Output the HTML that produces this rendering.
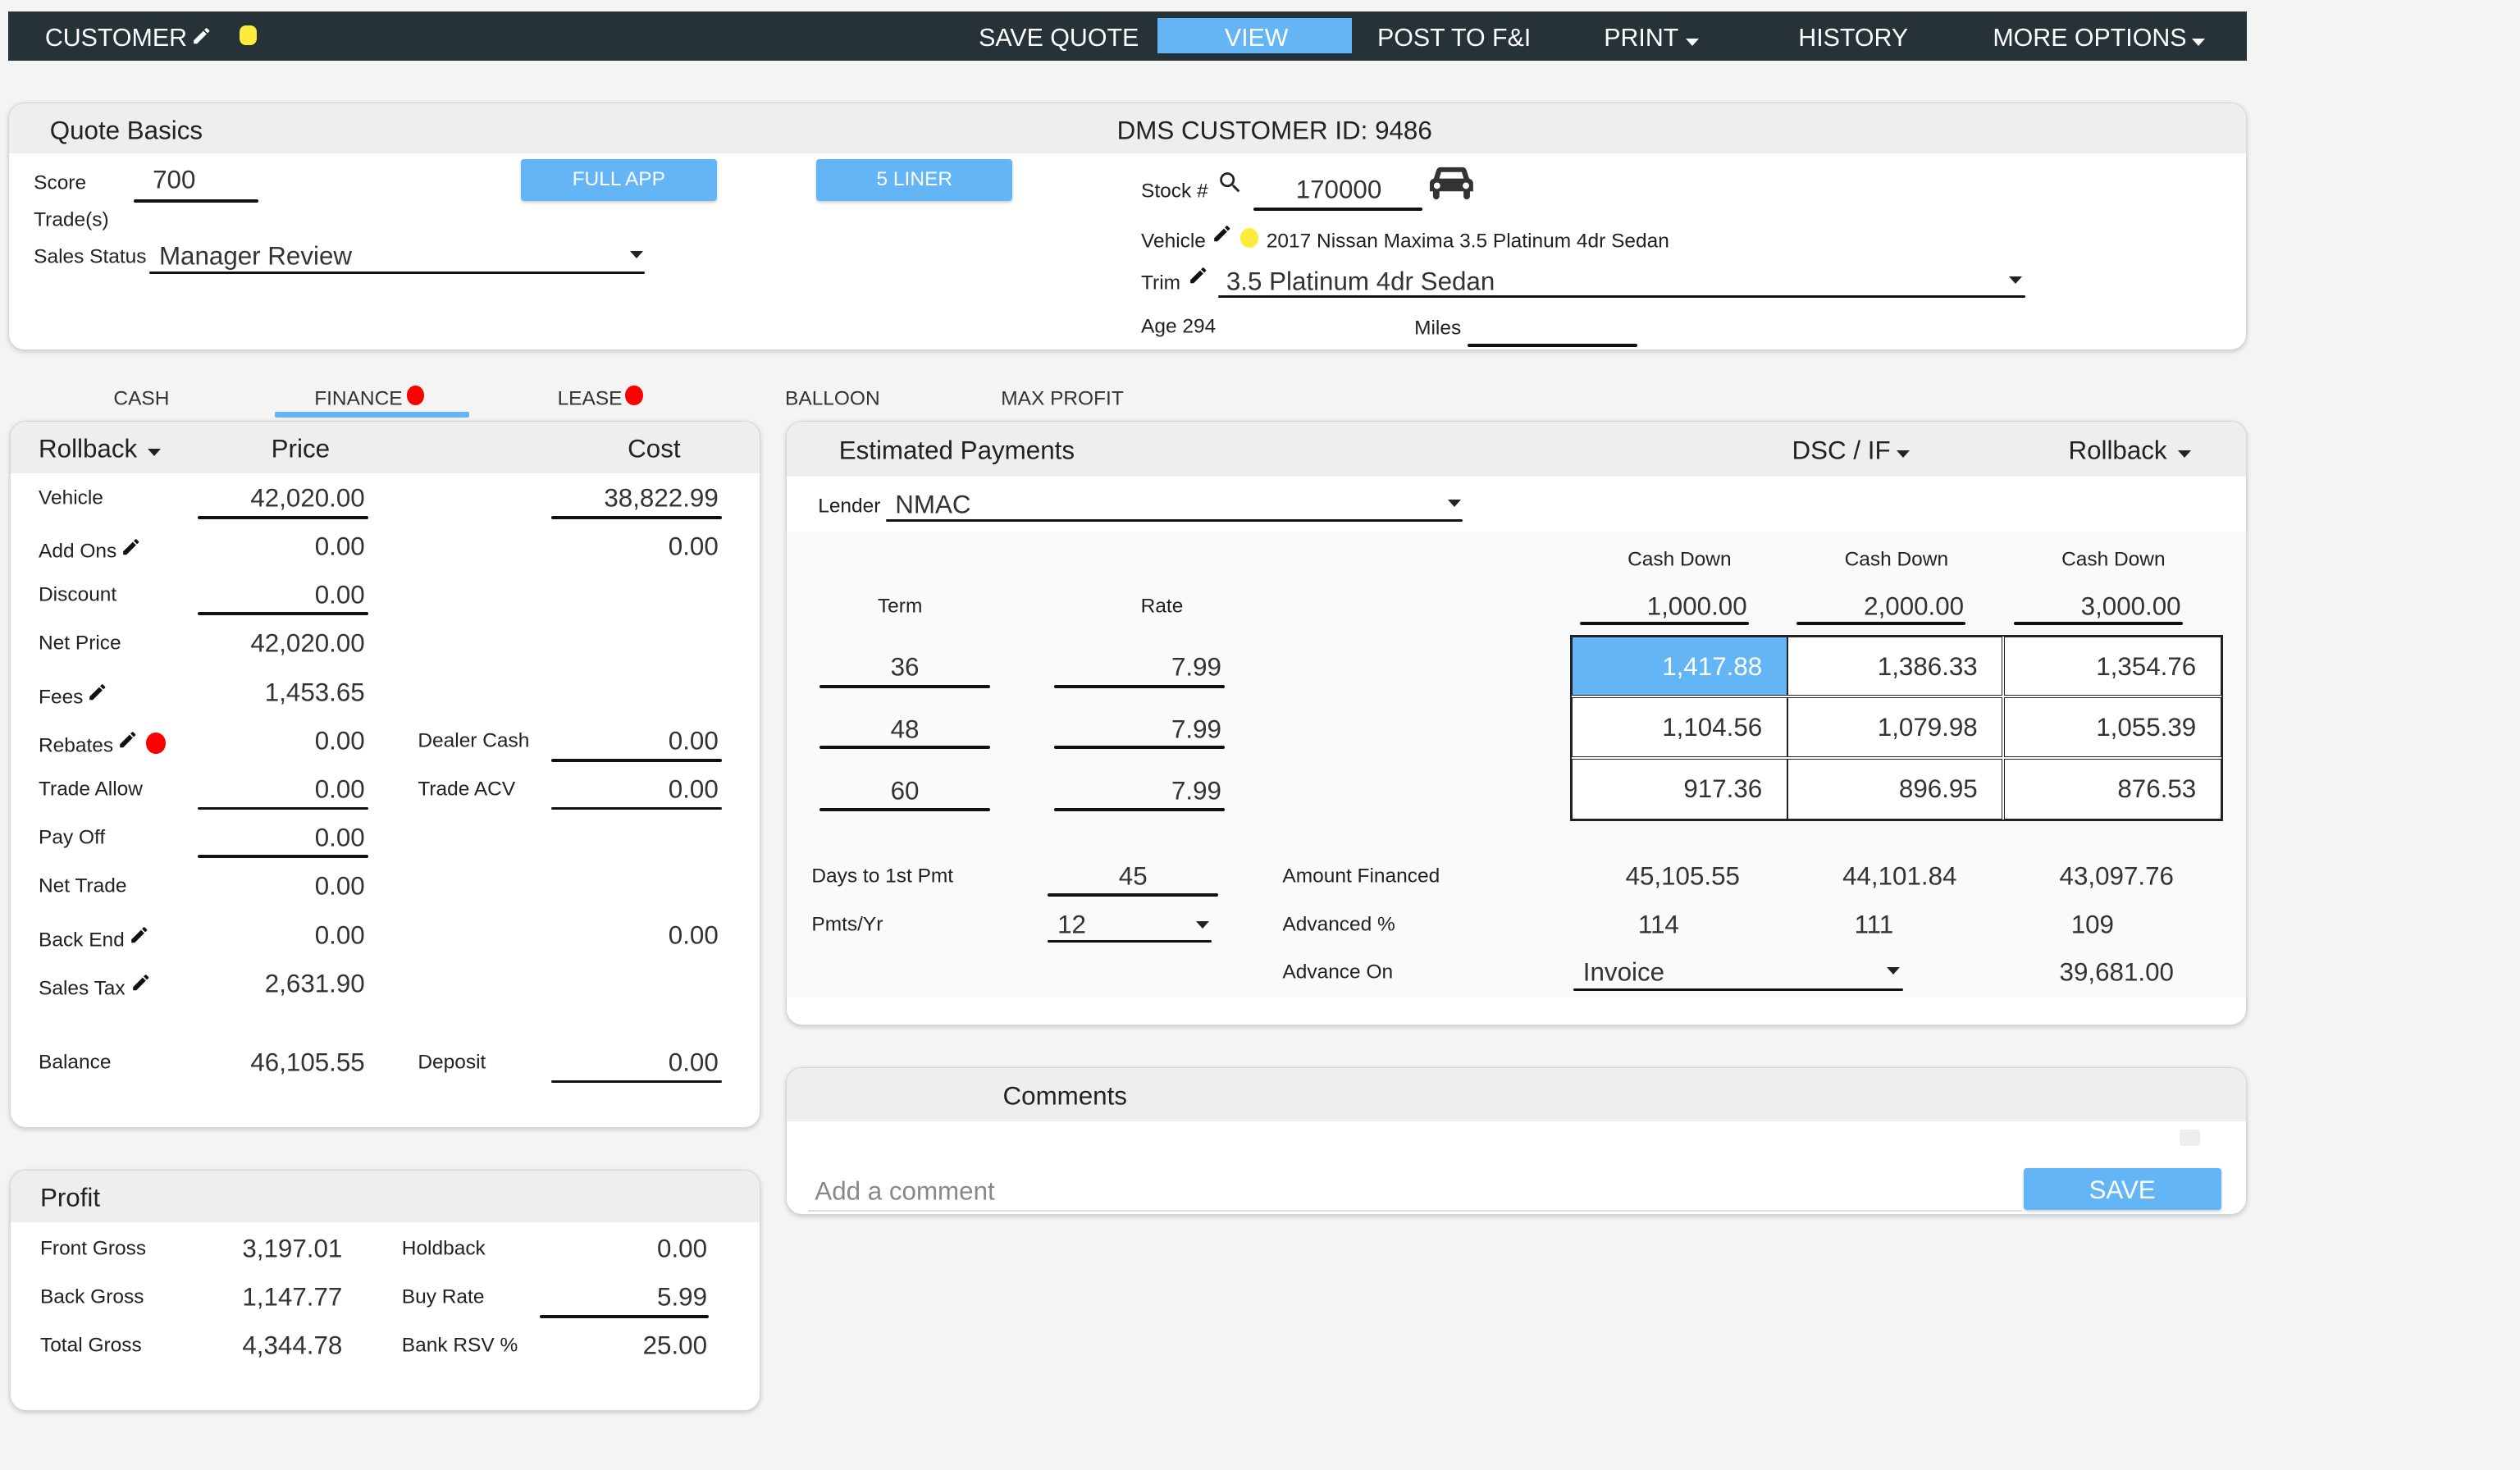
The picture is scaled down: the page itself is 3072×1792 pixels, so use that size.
<!DOCTYPE html>
<html><head><meta charset="utf-8">
<style>
html,body{margin:0;padding:0;background:#f4f4f4;overflow:hidden}
body{width:3072px;height:1792px}
#w{zoom:1.95918;position:relative;width:1568px;height:915px;font-family:"Liberation Sans",Arial,sans-serif;color:#222}
.t,.r,.c{position:absolute;white-space:nowrap;line-height:20px;transform:translateY(-50%)}
.r{transform:translate(-100%,-50%)}
.c{transform:translate(-50%,-50%)}
.u{position:absolute;height:2px;background:#111;border-radius:1px}
.s{font-size:12.5px}
.v{font-size:16px;color:#333}
.p{position:absolute;background:#fff;border:1px solid #d6d6d6;border-radius:10px;box-shadow:0 1px 3px rgba(0,0,0,.18);overflow:hidden}
.h{position:absolute;left:0;right:0;top:0;background:#eee}
.btn{position:absolute;background:#64b5f6;color:#fff;text-align:center;border-radius:2px;box-shadow:0 1px 2px rgba(0,0,0,.2)}
.dot{position:absolute;border-radius:50%}
.arr{position:absolute;width:0;height:0;border-left:4.5px solid transparent;border-right:4.5px solid transparent;border-top:5px solid #222}
.nav{position:absolute;left:5px;top:7px;width:1393px;height:31px;background:#263238}
.nv{position:absolute;color:#fff;font-size:15.5px;line-height:20px;top:7px;white-space:nowrap}
.cell{position:absolute;width:134px;height:37px;border:1px solid #222;box-sizing:border-box;font-size:16px;line-height:37px;text-align:right;padding-right:15px;color:#333}
</style></head><body><div id="w">

<div class="nav">
 <div class="nv" style="left:23px">CUSTOMER</div>
 <svg style="position:absolute;left:114px;top:9px" width="13" height="13" viewBox="0 0 24 24"><path fill="#fff" d="M3 17.25V21h3.75L17.81 9.94l-3.75-3.75L3 17.25zM20.71 7.04a1 1 0 000-1.41l-2.34-2.34a1 1 0 00-1.41 0l-1.83 1.83 3.75 3.75 1.83-1.83z"/></svg>
 <div class="dot" style="left:144px;top:9px;width:11px;height:12px;background:#ffeb3b;border-radius:4px"></div>
 <div class="nv" style="left:604px">SAVE QUOTE</div>
 <div style="position:absolute;left:715px;top:4px;width:121px;height:22px;background:#64b5f6"></div>
 <div class="nv" style="left:757px">VIEW</div>
 <div class="nv" style="left:852px">POST TO F&amp;I</div>
 <div class="nv" style="left:993px">PRINT</div>
 <div class="arr" style="left:1044px;top:17px;border-top-color:#fff"></div>
 <div class="nv" style="left:1114px">HISTORY</div>
 <div class="nv" style="left:1235px">MORE OPTIONS</div>
 <div class="arr" style="left:1359px;top:17px;border-top-color:#fff"></div>
</div>

<!-- Quote basics -->
<div class="p" style="left:5px;top:64px;width:1392px;height:153px"><div class="h" style="height:31px"></div></div>
<div class="t" style="left:31px;top:81px;font-size:16px">Quote Basics</div>
<div class="t" style="left:695px;top:81px;font-size:16px">DMS CUSTOMER ID: 9486</div>
<div class="t s" style="left:21px;top:114px">Score</div>
<div class="t v" style="left:95px;top:112px">700</div>
<div class="u" style="left:83px;top:124px;width:78px"></div>
<div class="btn" style="left:324px;top:99px;width:122px;height:26px;line-height:26px;font-size:12.5px">FULL APP</div>
<div class="btn" style="left:508px;top:99px;width:122px;height:26px;line-height:26px;font-size:12.5px">5 LINER</div>
<div class="t s" style="left:21px;top:137px">Trade(s)</div>
<div class="t s" style="left:21px;top:160px">Sales Status</div>
<div class="t v" style="left:99px;top:159px">Manager Review</div>
<div class="arr" style="left:392px;top:156px"></div>
<div class="u" style="left:93px;top:169px;width:308px;height:1.5px"></div>

<div class="t s" style="left:710px;top:119px">Stock #</div>
<svg style="position:absolute;left:757px;top:105px" width="17" height="17" viewBox="0 0 24 24"><path fill="#222" d="M15.5 14h-.79l-.28-.27A6.470 6.470 0 0016 9.5 6.5 6.5 0 109.5 16c1.61 0 3.090-.59 4.23-1.570l.27.28v.79l5 4.99L20.49 19l-4.99-5zm-6 0C7.01 14 5 11.99 5 9.5S7.01 5 9.5 5 14 7.01 14 9.5 11.99 14 9.5 14z"/></svg>
<div class="c v" style="left:833px;top:118px">170000</div>
<div class="u" style="left:780px;top:129px;width:105px"></div>
<svg style="position:absolute;left:889px;top:101px" width="28" height="24" viewBox="0 0 28 24"><path fill="#333" d="M7 3h14c1.2 0 2 .8 2.4 2l1.6 5c1.4.4 2.5 1.5 2.5 3v5h-2v3c0 1.1-.9 2-2 2s-2-.9-2-2v-3H6.5v3c0 1.1-.9 2-2 2s-2-.9-2-2v-3h-2v-5c0-1.5 1.1-2.6 2.5-3l1.6-5C5 3.8 5.8 3 7 3zm.6 3L6.4 10h15.2l-1.2-4H7.6zM5 12.5a2 2 0 100 4 2 2 0 000-4zm18 0a2 2 0 100 4 2 2 0 000-4z"/></svg>
<div class="t s" style="left:710px;top:150px">Vehicle</div>
<svg style="position:absolute;left:754px;top:139px" width="13" height="13" viewBox="0 0 24 24"><path fill="#111" d="M3 17.25V21h3.75L17.81 9.94l-3.75-3.75L3 17.25zM20.71 7.04a1 1 0 000-1.41l-2.34-2.34a1 1 0 00-1.41 0l-1.83 1.83 3.75 3.75 1.83-1.83z"/></svg>
<div class="dot" style="left:772px;top:142px;width:11px;height:12px;background:#ffeb3b"></div>
<div class="t" style="left:788px;top:150px;font-size:12.5px">2017 Nissan Maxima 3.5 Platinum 4dr Sedan</div>
<div class="t s" style="left:710px;top:176px">Trim</div>
<svg style="position:absolute;left:739px;top:165px" width="13" height="13" viewBox="0 0 24 24"><path fill="#111" d="M3 17.25V21h3.75L17.81 9.94l-3.75-3.75L3 17.25zM20.71 7.04a1 1 0 000-1.41l-2.34-2.34a1 1 0 00-1.41 0l-1.83 1.83 3.75 3.75 1.83-1.83z"/></svg>
<div class="t v" style="left:763px;top:175px">3.5 Platinum 4dr Sedan</div>
<div class="arr" style="left:1250px;top:172px"></div>
<div class="u" style="left:758px;top:184px;width:502px;height:1.5px"></div>
<div class="t s" style="left:710px;top:203px">Age 294</div>
<div class="t s" style="left:880px;top:204px">Miles</div>
<div class="u" style="left:913px;top:214px;width:106px"></div>

<!-- tabs -->
<div class="c s" style="left:88px;top:248px;color:#333">CASH</div>
<div class="c s" style="left:223px;top:248px;color:#333">FINANCE</div>
<div class="dot" style="left:253px;top:240px;width:11px;height:12px;background:#f00"></div>
<div class="u" style="left:171px;top:256px;width:121px;height:4px;background:#64b5f6"></div>
<div class="c s" style="left:367px;top:248px;color:#333">LEASE</div>
<div class="dot" style="left:389px;top:240px;width:11px;height:12px;background:#f00"></div>
<div class="c s" style="left:518px;top:248px;color:#333">BALLOON</div>
<div class="c s" style="left:661px;top:248px;color:#333">MAX PROFIT</div>

<!-- Left panel -->
<div class="p" style="left:6px;top:262px;width:466px;height:439px"><div class="h" style="height:32px"></div></div>
<div class="t" style="left:24px;top:279px;font-size:16px">Rollback</div>
<div class="arr" style="left:92px;top:279px"></div>
<div class="c" style="left:187px;top:279px;font-size:16px">Price</div>
<div class="c" style="left:407px;top:279px;font-size:16px">Cost</div>

<div class="t s" style="left:24px;top:310px">Vehicle</div>
<div class="r v" style="left:227px;top:310px">42,020.00</div><div class="u" style="left:123px;top:321px;width:106px"></div>
<div class="r v" style="left:447px;top:310px">38,822.99</div><div class="u" style="left:343px;top:321px;width:106px"></div>
<div class="t s" style="left:24px;top:343px">Add Ons</div>
<svg style="position:absolute;left:75px;top:334px" width="13" height="13" viewBox="0 0 24 24"><path fill="#111" d="M3 17.25V21h3.75L17.81 9.94l-3.75-3.75L3 17.25zM20.71 7.04a1 1 0 000-1.41l-2.34-2.34a1 1 0 00-1.41 0l-1.83 1.83 3.75 3.75 1.83-1.83z"/></svg>
<div class="r v" style="left:227px;top:340px">0.00</div>
<div class="r v" style="left:447px;top:340px">0.00</div>
<div class="t s" style="left:24px;top:370px">Discount</div>
<div class="r v" style="left:227px;top:370px">0.00</div><div class="u" style="left:123px;top:381px;width:106px"></div>
<div class="t s" style="left:24px;top:400px">Net Price</div>
<div class="r v" style="left:227px;top:400px">42,020.00</div>
<div class="t s" style="left:24px;top:434px">Fees</div>
<svg style="position:absolute;left:54px;top:424px" width="13" height="13" viewBox="0 0 24 24"><path fill="#111" d="M3 17.25V21h3.75L17.81 9.94l-3.75-3.75L3 17.25zM20.71 7.04a1 1 0 000-1.41l-2.34-2.34a1 1 0 00-1.41 0l-1.83 1.83 3.75 3.75 1.83-1.83z"/></svg>
<div class="r v" style="left:227px;top:431px">1,453.65</div>
<div class="t s" style="left:24px;top:464px">Rebates</div>
<svg style="position:absolute;left:73px;top:454px" width="13" height="13" viewBox="0 0 24 24"><path fill="#111" d="M3 17.25V21h3.75L17.81 9.94l-3.75-3.75L3 17.25zM20.71 7.04a1 1 0 000-1.41l-2.34-2.34a1 1 0 00-1.41 0l-1.83 1.83 3.75 3.75 1.83-1.83z"/></svg>
<div class="dot" style="left:91px;top:456px;width:12px;height:13px;background:#f00"></div>
<div class="r v" style="left:227px;top:461px">0.00</div>
<div class="t s" style="left:260px;top:461px">Dealer Cash</div>
<div class="r v" style="left:447px;top:461px">0.00</div><div class="u" style="left:343px;top:472px;width:106px"></div>
<div class="t s" style="left:24px;top:491px">Trade Allow</div>
<div class="r v" style="left:227px;top:491px">0.00</div><div class="u" style="left:123px;top:502px;width:106px"></div>
<div class="t s" style="left:260px;top:491px">Trade ACV</div>
<div class="r v" style="left:447px;top:491px">0.00</div><div class="u" style="left:343px;top:502px;width:106px"></div>
<div class="t s" style="left:24px;top:521px">Pay Off</div>
<div class="r v" style="left:227px;top:521px">0.00</div><div class="u" style="left:123px;top:532px;width:106px"></div>
<div class="t s" style="left:24px;top:551px">Net Trade</div>
<div class="r v" style="left:227px;top:551px">0.00</div>
<div class="t s" style="left:24px;top:585px">Back End</div>
<svg style="position:absolute;left:80px;top:575px" width="13" height="13" viewBox="0 0 24 24"><path fill="#111" d="M3 17.25V21h3.75L17.81 9.94l-3.75-3.75L3 17.25zM20.71 7.04a1 1 0 000-1.41l-2.34-2.34a1 1 0 00-1.41 0l-1.83 1.83 3.75 3.75 1.83-1.83z"/></svg>
<div class="r v" style="left:227px;top:582px">0.00</div>
<div class="r v" style="left:447px;top:582px">0.00</div>
<div class="t s" style="left:24px;top:615px">Sales Tax</div>
<svg style="position:absolute;left:81px;top:605px" width="13" height="13" viewBox="0 0 24 24"><path fill="#111" d="M3 17.25V21h3.75L17.81 9.94l-3.75-3.75L3 17.25zM20.71 7.04a1 1 0 000-1.41l-2.34-2.34a1 1 0 00-1.41 0l-1.83 1.83 3.75 3.75 1.83-1.83z"/></svg>
<div class="r v" style="left:227px;top:612px">2,631.90</div>
<div class="t s" style="left:24px;top:661px">Balance</div>
<div class="r v" style="left:227px;top:661px">46,105.55</div>
<div class="t s" style="left:260px;top:661px">Deposit</div>
<div class="r v" style="left:447px;top:661px">0.00</div><div class="u" style="left:343px;top:672px;width:106px"></div>

<!-- Profit -->
<div class="p" style="left:6px;top:728px;width:466px;height:149px"><div class="h" style="height:32px"></div></div>
<div class="t" style="left:25px;top:745px;font-size:16px">Profit</div>
<div class="t s" style="left:25px;top:777px">Front Gross</div>
<div class="r v" style="left:213px;top:777px">3,197.01</div>
<div class="t s" style="left:250px;top:777px">Holdback</div>
<div class="r v" style="left:440px;top:777px">0.00</div>
<div class="t s" style="left:25px;top:807px">Back Gross</div>
<div class="r v" style="left:213px;top:807px">1,147.77</div>
<div class="t s" style="left:250px;top:807px">Buy Rate</div>
<div class="r v" style="left:440px;top:807px">5.99</div><div class="u" style="left:336px;top:818px;width:105px"></div>
<div class="t s" style="left:25px;top:837px">Total Gross</div>
<div class="r v" style="left:213px;top:837px">4,344.78</div>
<div class="t s" style="left:250px;top:837px">Bank RSV %</div>
<div class="r v" style="left:440px;top:837px">25.00</div>

<!-- Estimated payments -->
<div class="p" style="left:489px;top:262px;width:908px;height:375px">
 <div class="h" style="height:34px"></div>
 <div style="position:absolute;left:0;right:0;top:68px;height:290px;background:#fafafa"></div>
</div>
<div class="t" style="left:522px;top:280px;font-size:16px">Estimated Payments</div>
<div class="t" style="left:1115px;top:280px;font-size:16px">DSC / IF</div>
<div class="arr" style="left:1180px;top:280px"></div>
<div class="t" style="left:1287px;top:280px;font-size:16px">Rollback</div>
<div class="arr" style="left:1355px;top:280px"></div>
<div class="t s" style="left:509px;top:315px">Lender</div>
<div class="t v" style="left:557px;top:314px">NMAC</div>
<div class="arr" style="left:901px;top:311px"></div>
<div class="u" style="left:551px;top:323px;width:359px;height:1.5px"></div>

<div class="c s" style="left:560px;top:377px">Term</div>
<div class="c s" style="left:723px;top:377px">Rate</div>
<div class="c s" style="left:1045px;top:348px">Cash Down</div>
<div class="c s" style="left:1180px;top:348px">Cash Down</div>
<div class="c s" style="left:1315px;top:348px">Cash Down</div>
<div class="r v" style="left:1087px;top:377px">1,000.00</div><div class="u" style="left:983px;top:387px;width:105px"></div>
<div class="r v" style="left:1222px;top:377px">2,000.00</div><div class="u" style="left:1118px;top:387px;width:105px"></div>
<div class="r v" style="left:1357px;top:377px">3,000.00</div><div class="u" style="left:1253px;top:387px;width:105px"></div>

<div class="c v" style="left:563px;top:415px">36</div><div class="u" style="left:510px;top:426px;width:106px"></div>
<div class="c v" style="left:563px;top:454px">48</div><div class="u" style="left:510px;top:464px;width:106px"></div>
<div class="c v" style="left:563px;top:492px">60</div><div class="u" style="left:510px;top:503px;width:106px"></div>
<div class="r v" style="left:760px;top:415px">7.99</div><div class="u" style="left:656px;top:426px;width:106px"></div>
<div class="r v" style="left:760px;top:454px">7.99</div><div class="u" style="left:656px;top:464px;width:106px"></div>
<div class="r v" style="left:760px;top:492px">7.99</div><div class="u" style="left:656px;top:503px;width:106px"></div>

<div style="position:absolute;left:977px;top:395px;width:406px;height:116px;border:1.5px solid #222;box-sizing:border-box;background:#fff"></div>
<div class="cell" style="left:978px;top:396px;background:#64b5f6;color:#fff">1,417.88</div>
<div class="cell" style="left:1112px;top:396px">1,386.33</div>
<div class="cell" style="left:1247px;top:396px;width:135px">1,354.76</div>
<div class="cell" style="left:978px;top:434px">1,104.56</div>
<div class="cell" style="left:1112px;top:434px">1,079.98</div>
<div class="cell" style="left:1247px;top:434px;width:135px">1,055.39</div>
<div class="cell" style="left:978px;top:472px;height:38px">917.36</div>
<div class="cell" style="left:1112px;top:472px;height:38px">896.95</div>
<div class="cell" style="left:1247px;top:472px;width:135px;height:38px">876.53</div>

<div class="t s" style="left:505px;top:545px">Days to 1st Pmt</div>
<div class="c v" style="left:705px;top:545px">45</div><div class="u" style="left:652px;top:556px;width:106px"></div>
<div class="t s" style="left:505px;top:575px">Pmts/Yr</div>
<div class="t v" style="left:658px;top:575px">12</div>
<div class="arr" style="left:744px;top:573px"></div>
<div class="u" style="left:652px;top:585px;width:102px;height:1.5px"></div>
<div class="t s" style="left:798px;top:545px">Amount Financed</div>
<div class="c v" style="left:1047px;top:545px">45,105.55</div>
<div class="c v" style="left:1182px;top:545px">44,101.84</div>
<div class="c v" style="left:1317px;top:545px">43,097.76</div>
<div class="t s" style="left:798px;top:575px">Advanced %</div>
<div class="c v" style="left:1032px;top:575px">114</div>
<div class="c v" style="left:1166px;top:575px">111</div>
<div class="c v" style="left:1302px;top:575px">109</div>
<div class="t s" style="left:798px;top:605px">Advance On</div>
<div class="t v" style="left:985px;top:605px">Invoice</div>
<div class="arr" style="left:1174px;top:602px"></div>
<div class="u" style="left:979px;top:615px;width:205px;height:1.5px"></div>
<div class="c v" style="left:1317px;top:605px">39,681.00</div>

<!-- Comments -->
<div class="p" style="left:489px;top:664px;width:908px;height:91px"><div class="h" style="height:33px"></div></div>
<div class="t" style="left:624px;top:682px;font-size:16px">Comments</div>
<div style="position:absolute;left:1356px;top:703px;width:13px;height:10px;background:#eee;border-radius:2px"></div>
<div class="t" style="left:507px;top:741px;font-size:16px;color:#888">Add a comment</div>
<div style="position:absolute;left:503px;top:753px;width:755px;height:1px;background:#ddd"></div>
<div class="btn" style="left:1259px;top:727px;width:123px;height:26px;line-height:28px;font-size:16px">SAVE</div>

</div></body></html>
